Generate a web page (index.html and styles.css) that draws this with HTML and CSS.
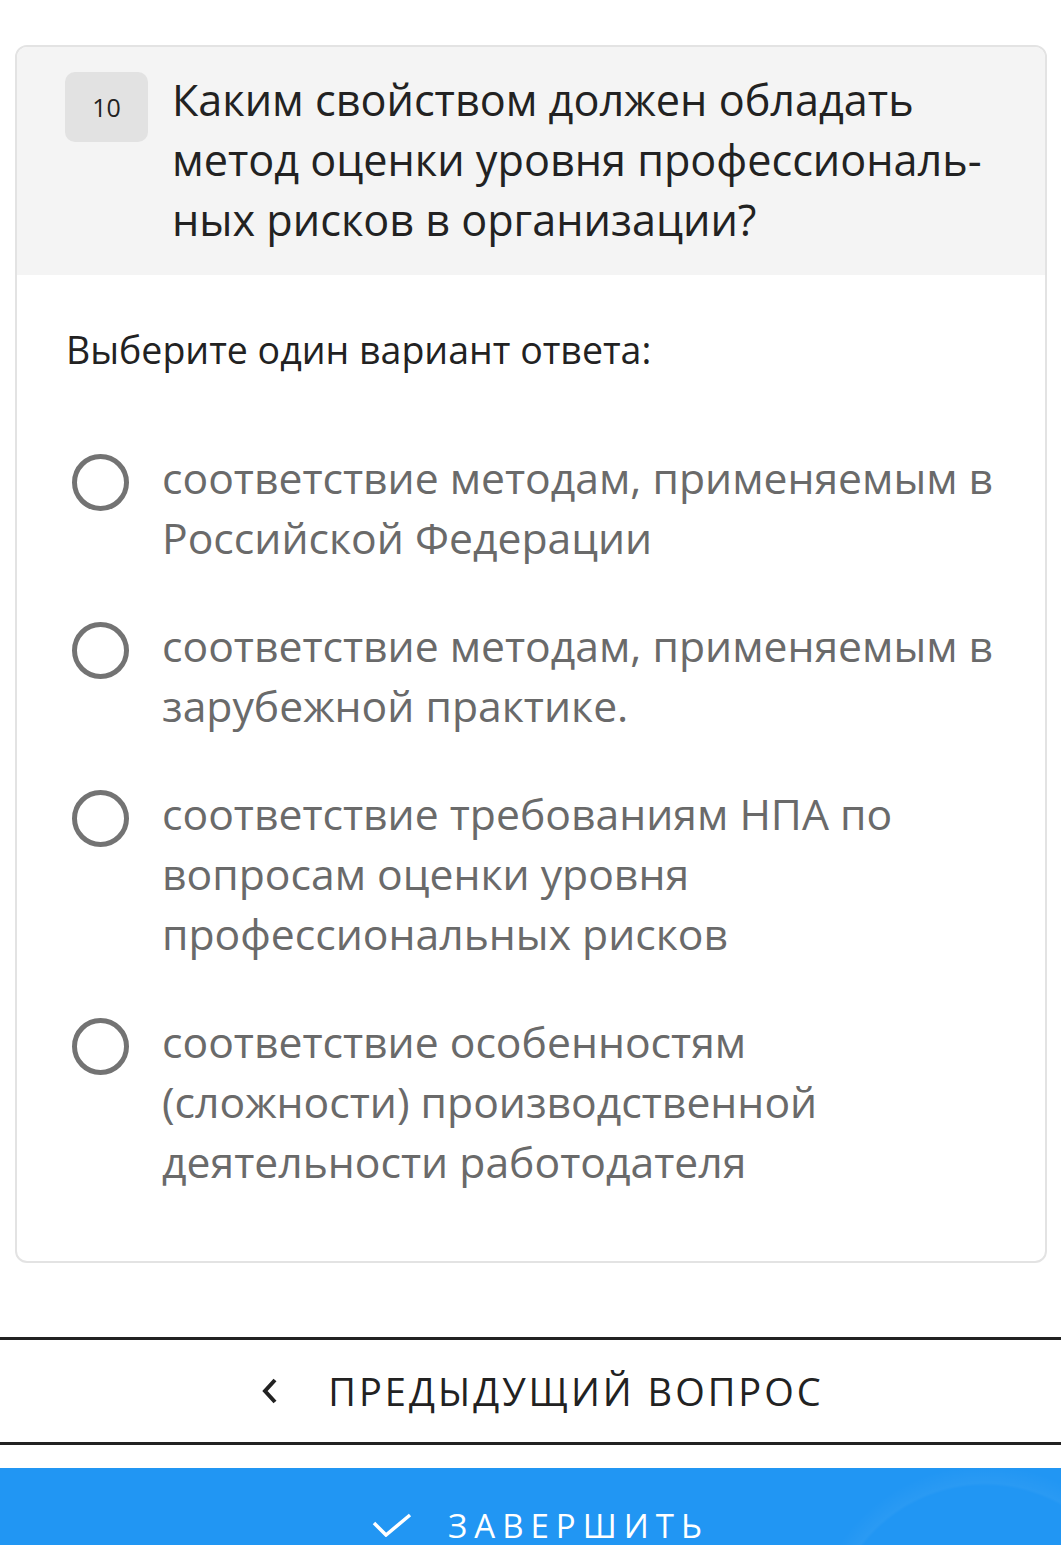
FILE: index.html
```html
<!DOCTYPE html>
<html lang="ru">
<head>
    <meta charset="UTF-8">
    <meta name="viewport" content="width=device-width, initial-scale=1.0">
    <title>Вопрос 10</title>
    <link rel="stylesheet" href="styles.css">
</head>
<body>

    <section class="question-card">
        <div class="question-head">
            <span class="question-num">10</span>
            <h2 class="question-title">Каким свойством должен обладать метод оценки уровня профессиональ&shy;ных рисков в организации?</h2>
        </div>
        <div class="question-body">
            <p class="question-hint">Выберите один вариант ответа:</p>
            <ul class="answers-list">
                <li class="answer">
                    <span class="radio"></span>
                    <span class="answer-text">соответствие методам, применяемым в Российской Федерации</span>
                </li>
                <li class="answer">
                    <span class="radio"></span>
                    <span class="answer-text">соответствие методам, применяемым в зарубежной практике.</span>
                </li>
                <li class="answer">
                    <span class="radio"></span>
                    <span class="answer-text">соответствие требованиям НПА по вопросам оценки уровня профессиональных рисков</span>
                </li>
                <li class="answer">
                    <span class="radio"></span>
                    <span class="answer-text">соответствие особенностям (сложности) производственной деятельности работодателя</span>
                </li>
            </ul>
        </div>
    </section>

    <div class="nav-buttons">
        <button class="btn btn-prev">
            <svg class="btn-icon" width="18" height="28" viewBox="0 0 18 28"><path d="M14 3 L4 14 L14 25" fill="none" stroke="#222" stroke-width="4"/></svg>
            <span>ПРЕДЫДУЩИЙ ВОПРОС</span>
        </button>
        <button class="btn btn-finish">
            <svg class="btn-icon" width="40" height="24" viewBox="0 0 40 24"><path d="M2 10 L14 22 L38 2" fill="none" stroke="#fff" stroke-width="3.5"/></svg>
            <span>ЗАВЕРШИТЬ</span>
        </button>
    </div>

</body>
</html>
```

FILE: styles.css
```css
body, body *, body *::before, body *::after {
    box-sizing: border-box;
    padding: 0;
    margin: 0;
}
body {
    font-family: "Open Sans", "Noto Sans", sans-serif;
    background-color: #fff;
    color: #222;
    padding-top: 45px;
}
.question-card {
    margin: 0 14px 0 15px;
    border: 2px solid #e3e3e3;
    border-radius: 12px;
    overflow: hidden;
}
.question-head {
    background-color: #f4f4f4;
    display: flex;
    align-items: flex-start;
    gap: 24px;
    padding: 25px 30px 25px 48px;
}
.question-num {
    flex: none;
    width: 83px;
    height: 70px;
    border-radius: 10px;
    background-color: #e2e2e2;
    display: flex;
    align-items: center;
    justify-content: center;
    font-size: 25px;
    color: #222;
}
.question-title {
    font-size: 43.2px;
    font-weight: normal;
    line-height: 60px;
    margin-top: -2px;
    hyphens: manual;
}
.question-body {
    padding: 45px 48px 69px 49px;
}
.question-hint {
    font-size: 37.5px;
    line-height: 60px;
}
.answers-list {
    list-style-type: none;
    display: flex;
    flex-direction: column;
    gap: 48px;
    margin-top: 68px;
}
.answer {
    display: flex;
    align-items: flex-start;
    gap: 33px;
}
.radio {
    flex: none;
    width: 57px;
    height: 57px;
    border: 5px solid #737373;
    border-radius: 50%;
    margin: 6px 0 0 6px;
}
.answer-text {
    font-size: 42.7px;
    line-height: 60px;
    color: #6a6a6a;
}
.nav-buttons {
    margin-top: 74px;
    display: flex;
    flex-direction: column;
    gap: 23px;
}
.btn {
    font-family: inherit;
    border: none;
    display: flex;
    align-items: center;
    justify-content: center;
    cursor: pointer;
}
.btn-prev {
    background-color: #fff;
    color: #222;
    border-top: 3px solid #222;
    border-bottom: 3px solid #222;
    height: 108px;
    gap: 49px;
    padding-left: 24px;
    font-size: 38px;
    letter-spacing: 3px;
}
.btn-finish {
    background-color: #2196f3;
    background-image: radial-gradient(circle at 985px 172px, rgba(255, 255, 255, 0) 154px, rgba(255, 255, 255, 0.04) 157px, rgba(255, 255, 255, 0) 175px);
    color: #fff;
    height: 114px;
    gap: 36px;
    padding-left: 20px;
    font-size: 33px;
    letter-spacing: 7px;
}
```
